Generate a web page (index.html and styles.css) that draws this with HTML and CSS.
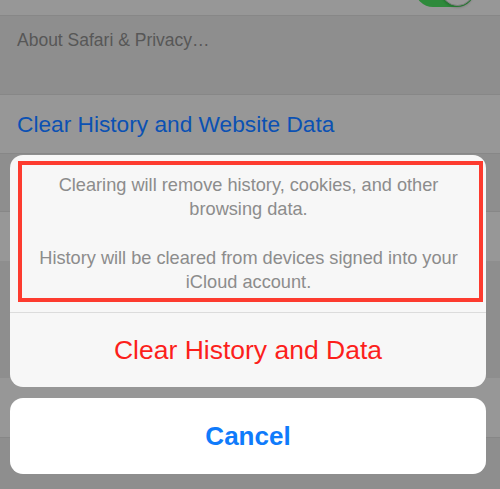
FILE: index.html
```html
<!DOCTYPE html>
<html lang="en">
<head>
<meta charset="utf-8">
<title>Clear History</title>
<link rel="stylesheet" href="styles.css">
</head>
<body>
<div class="screen">
  <div class="settings">
    <div class="row row-top">
      <div class="toggle"><div class="knob"></div></div>
    </div>
    <div class="group-footer">About Safari &amp; Privacy…</div>
    <div class="row row-link">Clear History and Website Data</div>
    <div class="gap gap-a"></div>
    <div class="row row-b"></div>
    <div class="gap gap-b"></div>
    <div class="row row-c"></div>
  </div>
  <div class="action-sheet">
    <div class="sheet">
      <div class="message">
        <p>Clearing will remove history, cookies, and other browsing data.</p>
        <p>History will be cleared from devices signed into your iCloud account.</p>
      </div>
      <div class="destructive">Clear History and Data</div>
    </div>
    <div class="cancel">Cancel</div>
  </div>
</div>
</body>
</html>
```
FILE: styles.css
```css
html, body {
  margin: 0;
  padding: 0;
}
body {
  width: 500px;
  height: 489px;
  overflow: hidden;
  background: #8e8e8e;
  font-family: "Liberation Sans", Arial, sans-serif;
}
.screen {
  position: relative;
  width: 500px;
  height: 489px;
  overflow: hidden;
}
.settings {
  display: flex;
  flex-direction: column;
}
.row {
  background: #979797;
  box-sizing: border-box;
}
.gap {
  background: #8e8e8e;
}
.row-top {
  height: 16px;
  border-bottom: 1px solid #878787;
  display: flex;
  justify-content: flex-end;
  overflow: hidden;
}
.toggle {
  width: 60px;
  height: 36px;
  margin-top: -29px;
  margin-right: 25px;
  border-radius: 18px;
  background: #2e8a3b;
  display: flex;
  justify-content: flex-end;
  align-items: center;
  padding: 0 1px;
  box-sizing: border-box;
}
.knob {
  width: 33px;
  height: 33px;
  border-radius: 50%;
  background: #999999;
  border: 1px solid #7f7f7f;
  box-sizing: border-box;
  box-shadow: 0 2px 2px rgba(0,0,0,0.15);
}
.group-footer {
  height: 79px;
  box-sizing: border-box;
  border-bottom: 1px solid #878787;
  padding: 13px 0 0 17px;
  font-size: 17.5px;
  line-height: 22px;
  color: #575757;
}
.row-link {
  height: 59px;
  border-bottom: 1px solid #878787;
  display: flex;
  align-items: center;
  padding-left: 17px;
  font-size: 22.7px;
  color: #0b51b3;
}
.gap-a {
  height: 57px;
}
.row-b {
  height: 50px;
  border-top: 1px solid #878787;
}
.gap-b {
  height: 117px;
}
.row-c {
  height: 60px;
  border-bottom: 1px solid #878787;
}

.action-sheet {
  position: absolute;
  top: 155px;
  left: 10px;
  width: 476px;
  display: flex;
  flex-direction: column;
  gap: 11px;
}
.sheet {
  background: #f7f7f7;
  border-radius: 13px;
  height: 232px;
  display: flex;
  flex-direction: column;
  overflow: hidden;
}
.message {
  margin: 6px 3px 10px 8px;
  border: 4px solid #fd3b2f;
  padding: 8px 8px 4px 4px;
  height: 141px;
  box-sizing: border-box;
  text-align: center;
  color: #8c8c8c;
  font-size: 18.2px;
  line-height: 24px;
}
.message p {
  margin: 0;
}
.message p + p {
  margin-top: 25px;
}
.destructive {
  flex: 1;
  border-top: 1px solid #dcdcdc;
  display: flex;
  align-items: center;
  justify-content: center;
  color: #fc1f1c;
  font-size: 26.5px;
}
.cancel {
  height: 76px;
  background: #ffffff;
  border-radius: 13px;
  display: flex;
  align-items: center;
  justify-content: center;
  color: #0f7bfb;
  font-size: 26px;
  font-weight: bold;
}
```
